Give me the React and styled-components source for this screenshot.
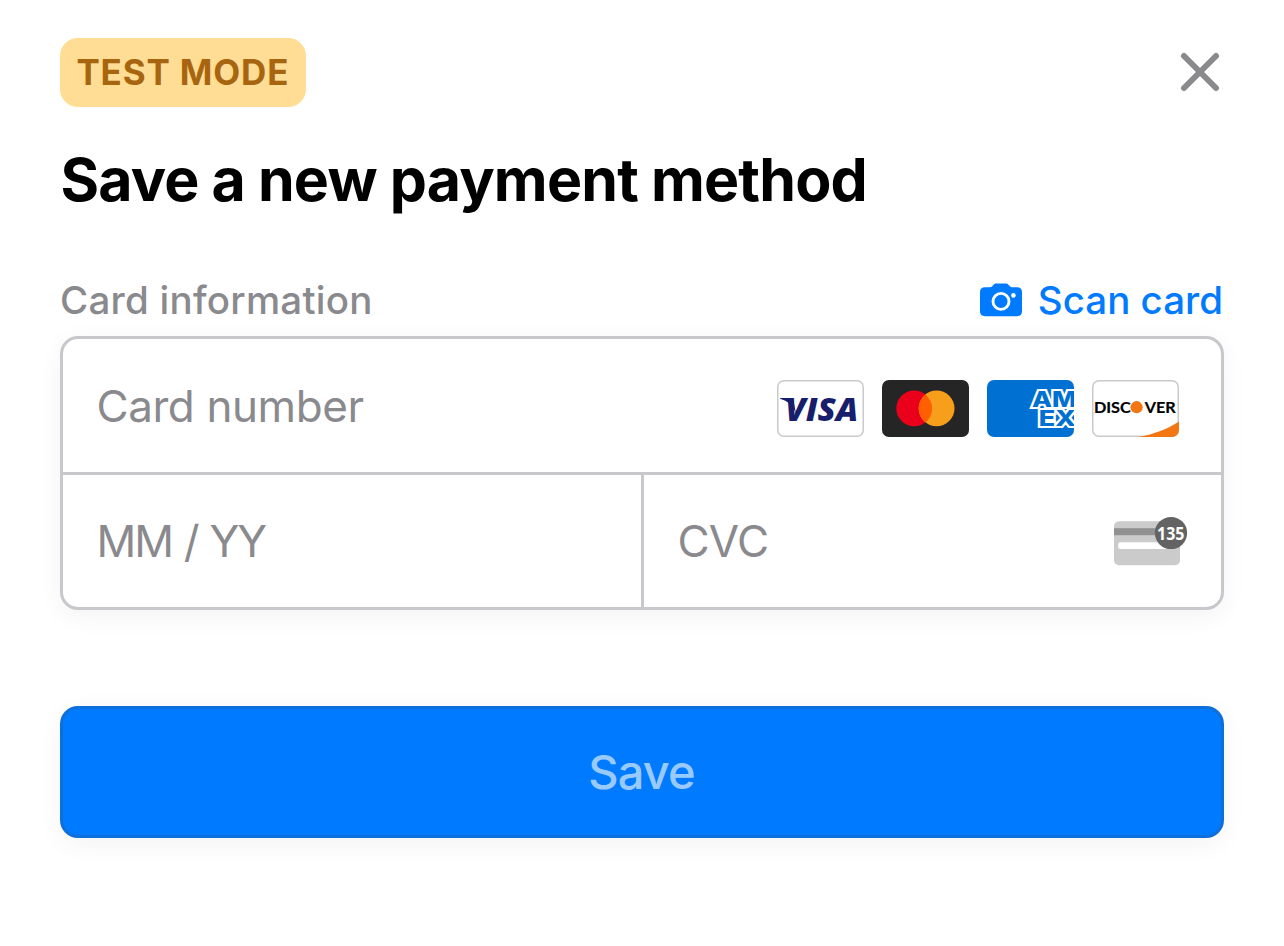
import React from "react";
import styled, { createGlobalStyle } from "styled-components";

const GlobalStyle = createGlobalStyle`
  *, *::before, *::after { box-sizing: border-box; }
  body {
    margin: 0;
    background: #ffffff;
    font-family: Inter, "Liberation Sans", sans-serif;
  }
`;

const Sheet = styled.main`
  display: flex;
  flex-direction: column;
  width: 1284px;
  height: 946px;
  padding: 38px 60px 0;
  overflow: hidden;
`;

const TopBar = styled.header`
  display: flex;
  align-items: center;
  justify-content: space-between;
  height: 69px;
`;

const ModeBadge = styled.span`
  display: flex;
  align-items: center;
  width: 246px;
  height: 69px;
  padding: 0 0 1px 16.4px;
  border-radius: 18px;
  background: #ffdd94;
  color: #a76510;
  font-size: 35px;
  font-weight: 700;
  line-height: 42px;
  letter-spacing: 0.85px;
  white-space: nowrap;
`;

const CloseButton = styled.button`
  display: flex;
  margin: 0 3px 2px 0;
  padding: 0;
  border: 0;
  background: none;
`;

const Title = styled.h1`
  margin: 37px 0 0;
  padding-left: 0.4px;
  font-size: 59px;
  font-weight: 700;
  line-height: 72px;
  letter-spacing: -0.8px;
  word-spacing: -0.2px;
  color: #000000;
  white-space: nowrap;
`;

const SectionHeader = styled.div`
  display: flex;
  align-items: center;
  justify-content: space-between;
  height: 48px;
  margin-top: 60px;
`;

const SectionLabel = styled.span`
  font-size: 38.5px;
  font-weight: 500;
  line-height: 48px;
  letter-spacing: 0.25px;
  color: #8a8a8e;
`;

const ScanButton = styled.button`
  display: flex;
  align-items: center;
  gap: 16px;
  margin: 0 1px 0 0;
  padding: 0;
  border: 0;
  background: none;
  color: #007aff;
  font-family: inherit;
  font-size: 38.5px;
  font-weight: 500;
  line-height: 48px;
`;

const CardForm = styled.section`
  height: 274px;
  margin-top: 12px;
  border: 3px solid #c7c7cc;
  border-radius: 18px;
  background: #ffffff;
  box-shadow: 0 6px 26px rgba(0, 0, 0, 0.05);
`;

const FieldRow = styled.div`
  display: grid;
  grid-template-columns: ${(p) => (p.$split ? "578px 1fr" : "1fr")};
  height: ${(p) => (p.$split ? "132px" : "136px")};
  border-bottom: ${(p) => (p.$split ? "0" : "3px solid #c7c7cc")};
`;

const Field = styled.div`
  display: flex;
  align-items: center;
  justify-content: space-between;
  padding: 0 ${(p) => p.$end || 0}px 0 33.4px;
  border-left: ${(p) => (p.$divided ? "3px solid #c7c7cc" : "0")};
`;

const Placeholder = styled.span`
  font-size: 44px;
  font-weight: 400;
  line-height: 54px;
  letter-spacing: ${(p) => p.$tracking}px;
  word-spacing: ${(p) => p.$gap || 0}px;
  color: #8a8a8e;
  white-space: nowrap;
`;

const Brands = styled.div`
  display: flex;
  gap: 18px;
  padding-top: 6px;
`;

const SaveButton = styled.button`
  height: 132px;
  margin: 96px 0 0;
  padding: 0 1px 0 0;
  border: 3px solid #0d6fdb;
  border-radius: 18px;
  background: #007aff;
  box-shadow: 0 6px 26px rgba(0, 0, 0, 0.05);
  color: #99caff;
  font-family: inherit;
  font-size: 47px;
  font-weight: 500;
  line-height: 56px;
  letter-spacing: -0.9px;
`;

const Icon = styled.svg`
  display: block;
  flex: none;
`;

function CloseIcon() {
  return (
    <Icon width="42" height="42" viewBox="0 0 42 42" fill="none">
      <path d="M5 5L37 37M37 5L5 37" stroke="#8a8a8e" strokeWidth="6" strokeLinecap="round" />
    </Icon>
  );
}

function CameraIcon() {
  return (
    <Icon width="42" height="34" viewBox="0 0 42 34">
      <path
        d="M5 4.2H10.2C11.2 4.2 11.7 3.9 12.4 3.1L13.8 1.5C14.5 .7 15.2 .4 16.3 .4H25.7C26.8 .4 27.5 .7 28.2 1.5L29.6 3.1C30.3 3.9 30.8 4.2 31.8 4.2H37C40.3 4.2 42 5.9 42 9.2V28.3C42 31.6 40.3 33.2 37 33.2H5C1.7 33.2 0 31.6 0 28.3V9.2C0 5.9 1.7 4.2 5 4.2Z"
        fill="#007aff"
      />
      <circle cx="21" cy="18.4" r="8" fill="none" stroke="#ffffff" strokeWidth="2.9" />
      <circle cx="33.4" cy="12.4" r="2.3" fill="#ffffff" />
    </Icon>
  );
}

function WhiteCard() {
  return (
    <rect x=".75" y=".75" width="85.5" height="55.5" rx="6.2" fill="#ffffff" stroke="#cacaca" strokeWidth="1.5" />
  );
}

function Visa() {
  return (
    <Icon width="87" height="57" viewBox="0 0 87 57">
      <WhiteCard />
      <path d="M3.2 18H12.5C15 18 16 18.8 16.4 20.4L19 33.5C16.2 25.5 10.5 20.8 3.1 18.7Z" fill="#171e6c" />
      <text
        x="8.2"
        y="40.6"
        textLength="73"
        lengthAdjust="spacingAndGlyphs"
        fontFamily='"Open Sans", sans-serif'
        fontSize="31.5"
        fontStyle="italic"
        fontWeight="800"
        fill="#171e6c"
      >
        VISA
      </text>
    </Icon>
  );
}

function Mastercard() {
  return (
    <Icon width="87" height="57" viewBox="0 0 87 57">
      <rect width="87" height="57" rx="7" fill="#252525" />
      <circle cx="32.2" cy="28.4" r="17.9" fill="#eb001b" />
      <circle cx="54.6" cy="28.4" r="17.9" fill="#f79e1b" />
      <path d="M43.4 14.4A17.9 17.9 0 0 1 43.4 42.4A17.9 17.9 0 0 1 43.4 14.4Z" fill="#ff5f00" />
    </Icon>
  );
}

function Amex() {
  return (
    <Icon width="87" height="57" viewBox="0 0 87 57">
      <clipPath id="amexCard">
        <rect width="87" height="57" rx="7" />
      </clipPath>
      <g clipPath="url(#amexCard)">
        <rect width="87" height="57" fill="#0071d2" />
        <text
          fontFamily='Inter, "Liberation Sans", sans-serif'
          fontSize="21.6"
          fontWeight="800"
          fill="#0071d2"
          stroke="#ffffff"
          strokeWidth="4"
          strokeMiterlimit="2.2"
          paintOrder="stroke"
        >
          <tspan x="45" y="27" textLength="44.5" lengthAdjust="spacingAndGlyphs">AM</tspan>
          <tspan x="51.8" y="46.2" textLength="37" lengthAdjust="spacingAndGlyphs">EX</tspan>
        </text>
      </g>
    </Icon>
  );
}

function Discover() {
  const letters = {
    fontFamily: 'Lato, "Liberation Sans", sans-serif',
    fontSize: 16,
    fontWeight: 700,
    fill: "#000000",
    stroke: "#000000",
    strokeWidth: 0.2,
    lengthAdjust: "spacingAndGlyphs",
  };
  return (
    <Icon width="87" height="57" viewBox="0 0 87 57">
      <clipPath id="discoverCard">
        <rect width="87" height="57" rx="7" />
      </clipPath>
      <WhiteCard />
      <path d="M46 57C61 54.5 75 49.5 87 41.5V57Z" fill="#f27712" clipPath="url(#discoverCard)" />
      <text x="1.9" y="33" textLength="36.8" {...letters}>DISC</text>
      <circle cx="44.6" cy="27.2" r="6.1" fill="#f27712" />
      <text x="52.8" y="33" textLength="31" {...letters}>VER</text>
    </Icon>
  );
}

function CvcIcon() {
  return (
    <Icon width="74" height="50" viewBox="0 0 74 50">
      <rect y="5.3" width="66" height="44" rx="5" fill="#cbcbcb" />
      <rect y="12.2" width="66" height="7" fill="#919191" />
      <rect x="4.2" y="26.3" width="57.6" height="6.8" rx="2.4" fill="#ffffff" />
      <circle cx="57" cy="17" r="16.1" fill="#636363" />
      <text
        x="43"
        y="23.6"
        textLength="27.4"
        lengthAdjust="spacingAndGlyphs"
        fontFamily='"Open Sans", sans-serif'
        fontSize="18.6"
        fontWeight="700"
        fill="#ffffff"
      >
        135
      </text>
    </Icon>
  );
}

export default function App() {
  return (
    <>
      <GlobalStyle />
      <Sheet>
        <TopBar>
          <ModeBadge>TEST MODE</ModeBadge>
          <CloseButton aria-label="Close">
            <CloseIcon />
          </CloseButton>
        </TopBar>
        <Title>Save a new payment method</Title>
        <SectionHeader>
          <SectionLabel>Card information</SectionLabel>
          <ScanButton>
            <CameraIcon />
            Scan card
          </ScanButton>
        </SectionHeader>
        <CardForm>
          <FieldRow>
            <Field $end={42}>
              <Placeholder $tracking={-0.4}>Card number</Placeholder>
              <Brands>
                <Visa />
                <Mastercard />
                <Amex />
                <Discover />
              </Brands>
            </Field>
          </FieldRow>
          <FieldRow $split>
            <Field>
              <Placeholder $tracking={-1.9} $gap={1.2}>MM / YY</Placeholder>
            </Field>
            <Field $divided $end={33}>
              <Placeholder $tracking={-0.7}>CVC</Placeholder>
              <CvcIcon />
            </Field>
          </FieldRow>
        </CardForm>
        <SaveButton>Save</SaveButton>
      </Sheet>
    </>
  );
}
